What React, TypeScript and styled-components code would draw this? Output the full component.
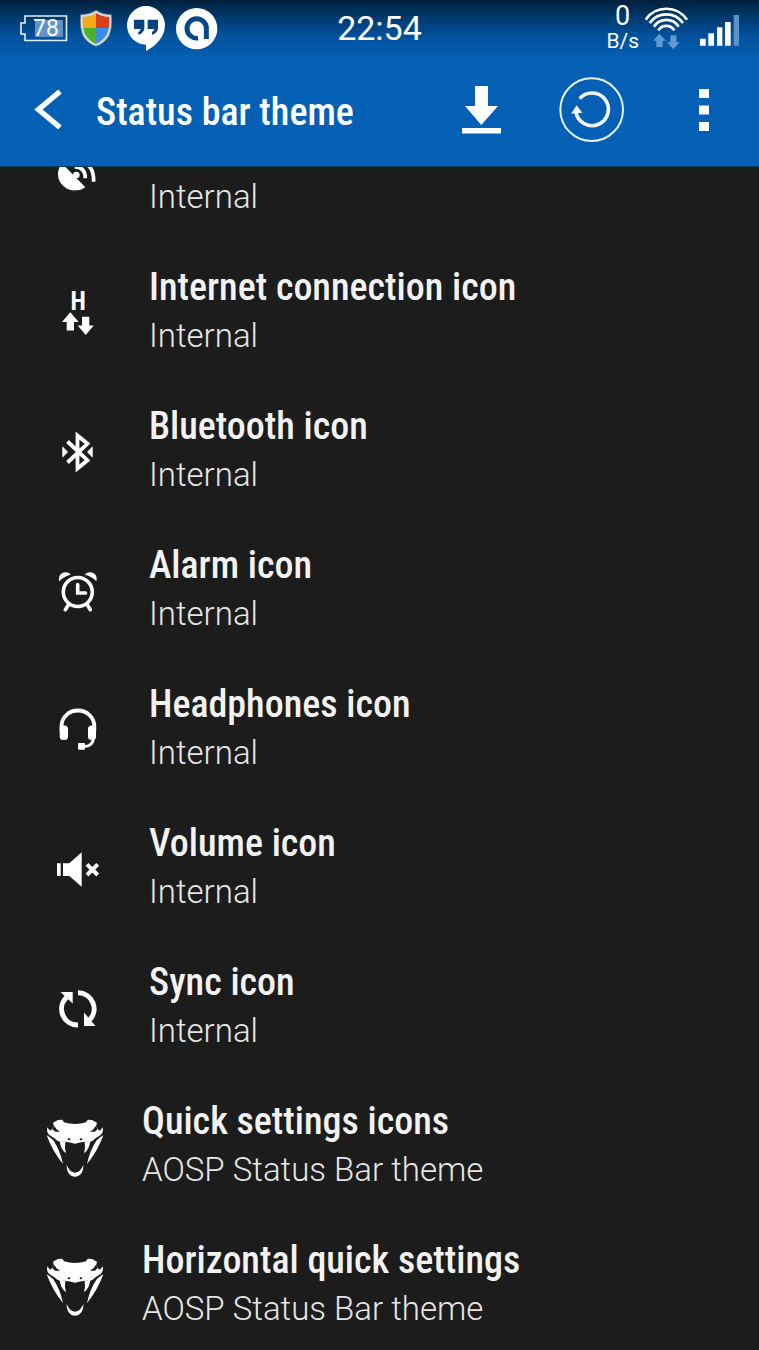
import React from 'react';
import styled, { createGlobalStyle } from 'styled-components';

const condensed = '"Roboto Condensed", Roboto, "Liberation Sans Narrow", sans-serif';

const GlobalStyle = createGlobalStyle`
  * { box-sizing: border-box; }
  body {
    margin: 0;
    background: #1c1c1c;
    color: #f2f2f2;
    font-family: Roboto, "Liberation Sans", sans-serif;
  }
`;

const Screen = styled.div`
  display: flex;
  flex-direction: column;
  height: 100vh;
  overflow: hidden;
`;

const Header = styled.header`
  flex: none;
  color: #fff;
  background: linear-gradient(#00203c 0, #003a70 18px, #0353a0 38px, #0360b4 60px);
  border-bottom: 1px solid #0a3a64;
`;

const StatusBar = styled.div`
  display: grid;
  grid-template-columns: 1fr auto 1fr;
  height: 52px;
  padding: 0 20px;
`;

const StatusGroup = styled.div<{ $end?: boolean }>`
  display: flex;
  align-items: center;
  justify-content: ${(p) => (p.$end ? 'flex-end' : 'flex-start')};
  gap: ${(p) => (p.$end ? 6 : 8)}px;
`;

const Clock = styled.time`
  font-size: 34px;
  line-height: 56px;
`;

const Speed = styled.div`
  display: flex;
  flex-direction: column;
  align-items: center;
  height: 52px;
  font-size: 21px;
  line-height: 22px;
`;

const SpeedValue = styled.span`
  font-size: 27px;
  line-height: 28px;
`;

const Toolbar = styled.div`
  display: flex;
  align-items: flex-start;
  padding: 25px 23px 19px 15px;
`;

const IconButton = styled.button`
  width: 66px;
  height: 66px;
  padding: 0;
  border: 0;
  background: none;
  color: inherit;
  cursor: pointer;

  svg { display: block; }
`;

const Title = styled.h1`
  flex: 1;
  margin: 0 0 0 15px;
  font: 500 38px/70px ${condensed};
  white-space: nowrap;
`;

const Actions = styled.div`
  display: flex;
  gap: 45px;
`;

const List = styled.ul`
  flex: 1;
  min-height: 0;
  margin: 0;
  padding: 0;
  list-style: none;
  overflow: hidden;
`;

const Row = styled.li<{ $wide?: boolean; $cut?: boolean }>`
  display: flex;
  align-items: flex-start;
  height: ${(p) => (p.$cut ? 75 : 139)}px;
  padding-left: ${(p) => (p.$wide ? 45 : 48)}px;
  gap: ${(p) => (p.$wide ? 37 : 41)}px;
`;

const RowIcon = styled.svg<{ $cut?: boolean }>`
  flex: none;
  width: 60px;
  height: ${(p) => (p.$cut ? 37 : 60)}px;
  margin-top: ${(p) => (p.$cut ? 0 : 41)}px;
`;

const RowText = styled.div<{ $cut?: boolean }>`
  padding-top: ${(p) => (p.$cut ? 6 : 20)}px;
  white-space: nowrap;
`;

const RowTitle = styled.h2`
  margin: 0;
  font: 500 38px/50px ${condensed};
`;

const RowValue = styled.p`
  margin: 0;
  font-size: 33px;
  font-weight: 300;
  line-height: 48px;
  color: #e6e6e6;
`;

const BatteryIcon = () => (
  <svg width="48" height="52" viewBox="0 0 48 52" role="img" aria-label="Battery 78">
    <rect x="15" y="18" width="28" height="17" fill="#5f94c8" />
    <path d="M5 14H46.5V38.500H5V32H1V21H5Z" fill="none" stroke="#e4eef8" strokeWidth="1.600" />
    <text x="26" y="34" textAnchor="middle" fontSize="23" fontFamily="Roboto" fill="#fff">78</text>
  </svg>
);

const ShieldIcon = () => (
  <svg width="40" height="52" viewBox="228 0 120 156" aria-hidden="true">
    <defs>
      <clipPath id="shield">
        <path d="M288 33Q269 45 248 45Q246 75 255 96Q266 116 288 126Q310 116 321 96Q330 75 328 45Q307 45 288 33Z" />
      </clipPath>
    </defs>
    <path d="M288 25Q268 39 242 38Q238 76 249 101Q262 124 288 133Q314 124 327 101Q338 76 334 38Q308 39 288 25Z" fill="#d5d8d8" stroke="#6f7c88" strokeWidth="2" />
    <g clipPath="url(#shield)">
      <path d="M240 25H288V78H240Z" fill="#f5ab18" />
      <path d="M288 25H336V78H288Z" fill="#d8401c" />
      <path d="M240 78H288V135H240Z" fill="#4cb02c" />
      <path d="M288 78H336V135H288Z" fill="#3b8ee8" />
    </g>
  </svg>
);

const QuoteIcon = () => (
  <svg width="44" height="52" viewBox="372 0 132 156" aria-hidden="true">
    <path d="M438 12A57 58 0 0 1 495 70C495 104 468 132 438 147V128A57 58 0 0 1 438 12Z" fill="#fff" />
    <path d="M402 53H433V80Q430 94 415 98V90Q422 87 422 81H402ZM443 53H474V80Q471 94 456 98V90Q463 87 463 81H443Z" fill="#05427e" />
  </svg>
);

const RoundIcon = () => (
  <svg width="42" height="52" viewBox="528 0 126 156" aria-hidden="true">
    <circle cx="590" cy="80" r="62" fill="#fff" />
    <path d="M594 108A29 29 0 1 1 619 81V111" fill="none" stroke="#05488a" strokeWidth="15" />
    <path d="M594 97A14 14 0 1 1 605 83V108" fill="none" stroke="#fff" strokeWidth="10" />
  </svg>
);

const WifiIcon = () => (
  <svg width="48" height="52" viewBox="435 0 144 156" aria-hidden="true">
    <g fill="none" stroke="#fff" strokeWidth="8">
      <path d="M437 53A75 75 0 0 1 561 53" />
      <path d="M449 63A61 61 0 0 1 549 63" />
      <path d="M462 74A44 44 0 0 1 536 74" />
      <path d="M475 85A28 28 0 0 1 523 85" />
    </g>
    <path d="M478 95L498 116H488V135H469V116H459ZM520 142L539 121H529V100H511V121H501Z" fill="#5f9bd3" />
  </svg>
);

const SignalIcon = () => (
  <svg width="40" height="52" viewBox="597 0 120 156" aria-hidden="true">
    <path d="M600 110H617V131H600ZM625 94H642V131H625ZM651 76H667V131H651ZM675 60H692V131H675Z" fill="#fff" />
    <path d="M701 39H718V131H701Z" fill="#5b93c9" />
  </svg>
);

const BackIcon = () => (
  <svg width="66" height="66" viewBox="15 77 66 66" aria-hidden="true">
    <path d="M60 91.500L38.500 109.500L60 127.500" fill="none" stroke="#fff" strokeWidth="5.500" />
  </svg>
);

const DownloadIcon = () => (
  <svg width="66" height="66" viewBox="448 77 66 66" aria-hidden="true">
    <path d="M475 86H488V106H498L481.300 125L465 106H475ZM462 128H501V133.500H462Z" fill="#fff" />
  </svg>
);

const RefreshIcon = () => (
  <svg width="66" height="66" viewBox="178 231 198 198" aria-hidden="true">
    <circle cx="276" cy="329" r="94" fill="none" stroke="#e8f2fc" strokeWidth="6" />
    <path d="M240 296A49 49 0 1 1 229 337" fill="none" stroke="#f4f8fd" strokeWidth="11" />
    <path d="M231 316L214 341L248 338Z" fill="#f4f8fd" />
  </svg>
);

const MoreIcon = () => (
  <svg width="66" height="66" viewBox="670 77 66 66" aria-hidden="true">
    <path d="M699 89H709V98H699ZM699 105.500H709V114.500H699ZM699 122H709V131H699Z" fill="#fff" />
  </svg>
);

const gps = (
  <>
    <path d="M96 10L166 82Q152 92 138 91A49 49 0 0 1 96 10Z" fill="#fff" />
    <circle cx="139" cy="45" r="10" fill="#fff" />
    <path d="M139 45L124 60" stroke="#fff" strokeWidth="7" />
    <path d="M134 21Q166 21 166 55" fill="none" stroke="#fff" strokeWidth="11" />
    <path d="M150 4Q192 12 191 65" fill="none" stroke="#fff" strokeWidth="11" />
  </>
);

const internet = (
  <g fill="#fff">
    <text x="30.300" y="26.700" textAnchor="middle" fontSize="25" fontWeight="700" fontFamily={condensed}>H</text>
    <path d="M22.300 29.300L30.700 39H26V47.500H18.700V39H14ZM37.700 52L29.700 42.500H34V33.700H41.300V42.500H45.700Z" />
  </g>
);

const bluetooth = (
  <>
    <path d="M19.500 19.500L39.500 38.300L29.500 46.500V13.500L39.500 21.700L19.500 40.500" fill="none" stroke="#fff" strokeWidth="3.800" />
    <path d="M14.300 24.300V35.700L20 30ZM44.700 24.300V35.700L39 30Z" fill="#fff" />
  </>
);

const alarm = (
  <>
    <g fill="none" stroke="#fff" strokeWidth="3.600" strokeLinecap="round">
      <circle cx="29.800" cy="31" r="14.500" />
      <path d="M29.700 23.500V32H37.500M20 44.500L17.300 48.700M39.700 44.500L42.300 48.700" />
    </g>
    <path d="M11.300 20.300Q10 15 13.500 12.500Q18.500 9.500 23 13.500Q15.500 15.500 11.300 20.300ZM48.300 20.300Q49.600 15 46.100 12.500Q41.100 9.500 36.600 13.500Q44.100 15.500 48.300 20.300Z" fill="#fff" />
  </>
);

const headphones = (
  <>
    <path d="M13.500 31V26A16.400 15.500 0 0 1 46.300 26V31" fill="none" stroke="#fff" strokeWidth="3.800" />
    <rect x="11.700" y="25.500" width="8.300" height="14.500" rx="3.500" fill="#fff" />
    <rect x="40" y="25.500" width="8" height="14.500" rx="3.500" fill="#fff" />
    <path d="M45.500 38Q45 46.500 36 46.500" fill="none" stroke="#fff" strokeWidth="3" />
    <rect x="30" y="43" width="7" height="6.700" rx="1" fill="#fff" />
  </>
);

const volume = (
  <>
    <path d="M9 24.300H12.700V37H9ZM15 24.300H21.300L33.700 13.300V47.700L21.300 37H15Z" fill="#fff" />
    <path d="M39 25.300L49.700 36M49.700 25.300L39 36" stroke="#fff" strokeWidth="4" />
  </>
);

const sync = (
  <>
    <path d="M30 14.800A16 16 0 0 1 41 42.500M30 47A16 16 0 0 1 18.500 19.500" fill="none" stroke="#fff" strokeWidth="5" />
    <path d="M36 34.500L47.500 48H36ZM12.500 14H24.700V25.500Z" fill="#fff" />
  </>
);

const snake = (
  <g fill="#fff">
    <path d="M69 458L84 450L97 449L102 457Q118 462 135 462Q152 462 168 457L173 449L186 450L201 458L198 470L204 478L210 482L218 472Q221 488 212 495Q198 503 188 512Q178 517 166 515Q150 516 135 521Q120 516 104 515Q92 517 82 512Q72 503 58 495Q49 488 52 472L60 482L66 478L72 470Z" />
    <path d="M89 513L106 516Q103 533 108 550Q92 539 89 513ZM181 513L164 516Q167 533 162 550Q178 539 181 513Z" />
    <path d="M50 496Q60 501 70 511Q90 540 99 582Q68 545 50 496ZM220 496Q210 501 200 511Q180 540 171 582Q202 545 220 496Z" />
    <path d="M110 585Q109 609 125 618Q135 623 145 618Q161 609 160 585Q151 607 135 608Q119 607 110 585Z" />
    <g fill="#1c1c1c">
      <path d="M73 468L79 477L90 485L76 485L67 478ZM197 468L191 477L180 485L194 485L203 478Z" />
      <ellipse cx="117" cy="508" rx="4" ry="3" />
      <ellipse cx="153" cy="508" rx="4" ry="3" />
    </g>
  </g>
);

type Item = { title: string; value: string; icon: React.ReactNode; wide?: boolean };

const items: Item[] = [
  { title: 'Internet connection icon', value: 'Internal', icon: internet },
  { title: 'Bluetooth icon', value: 'Internal', icon: bluetooth },
  { title: 'Alarm icon', value: 'Internal', icon: alarm },
  { title: 'Headphones icon', value: 'Internal', icon: headphones },
  { title: 'Volume icon', value: 'Internal', icon: volume },
  { title: 'Sync icon', value: 'Internal', icon: sync },
  { title: 'Quick settings icons', value: 'AOSP Status Bar theme', icon: snake, wide: true },
  { title: 'Horizontal quick settings', value: 'AOSP Status Bar theme', icon: snake, wide: true },
];

export default function App() {
  return (
    <Screen>
      <GlobalStyle />
      <Header>
        <StatusBar>
          <StatusGroup>
            <BatteryIcon />
            <ShieldIcon />
            <QuoteIcon />
            <RoundIcon />
          </StatusGroup>
          <Clock>22:54</Clock>
          <StatusGroup $end>
            <Speed>
              <SpeedValue>0</SpeedValue>
              <span>B/s</span>
            </Speed>
            <WifiIcon />
            <SignalIcon />
          </StatusGroup>
        </StatusBar>
        <Toolbar>
          <IconButton type="button" aria-label="Back"><BackIcon /></IconButton>
          <Title>Status bar theme</Title>
          <Actions>
            <IconButton type="button" aria-label="Download"><DownloadIcon /></IconButton>
            <IconButton type="button" aria-label="Reset"><RefreshIcon /></IconButton>
            <IconButton type="button" aria-label="More options"><MoreIcon /></IconButton>
          </Actions>
        </Toolbar>
      </Header>
      <List>
        <Row $cut>
          <RowIcon $cut viewBox="54 21 180 111" aria-hidden="true">{gps}</RowIcon>
          <RowText $cut>
            <RowValue>Internal</RowValue>
          </RowText>
        </Row>
        {items.map((item) => (
          <Row key={item.title} $wide={item.wide}>
            <RowIcon viewBox={item.wide ? '45 441 180 180' : '0 0 60 60'} aria-hidden="true">
              {item.icon}
            </RowIcon>
            <RowText>
              <RowTitle>{item.title}</RowTitle>
              <RowValue>{item.value}</RowValue>
            </RowText>
          </Row>
        ))}
      </List>
    </Screen>
  );
}
